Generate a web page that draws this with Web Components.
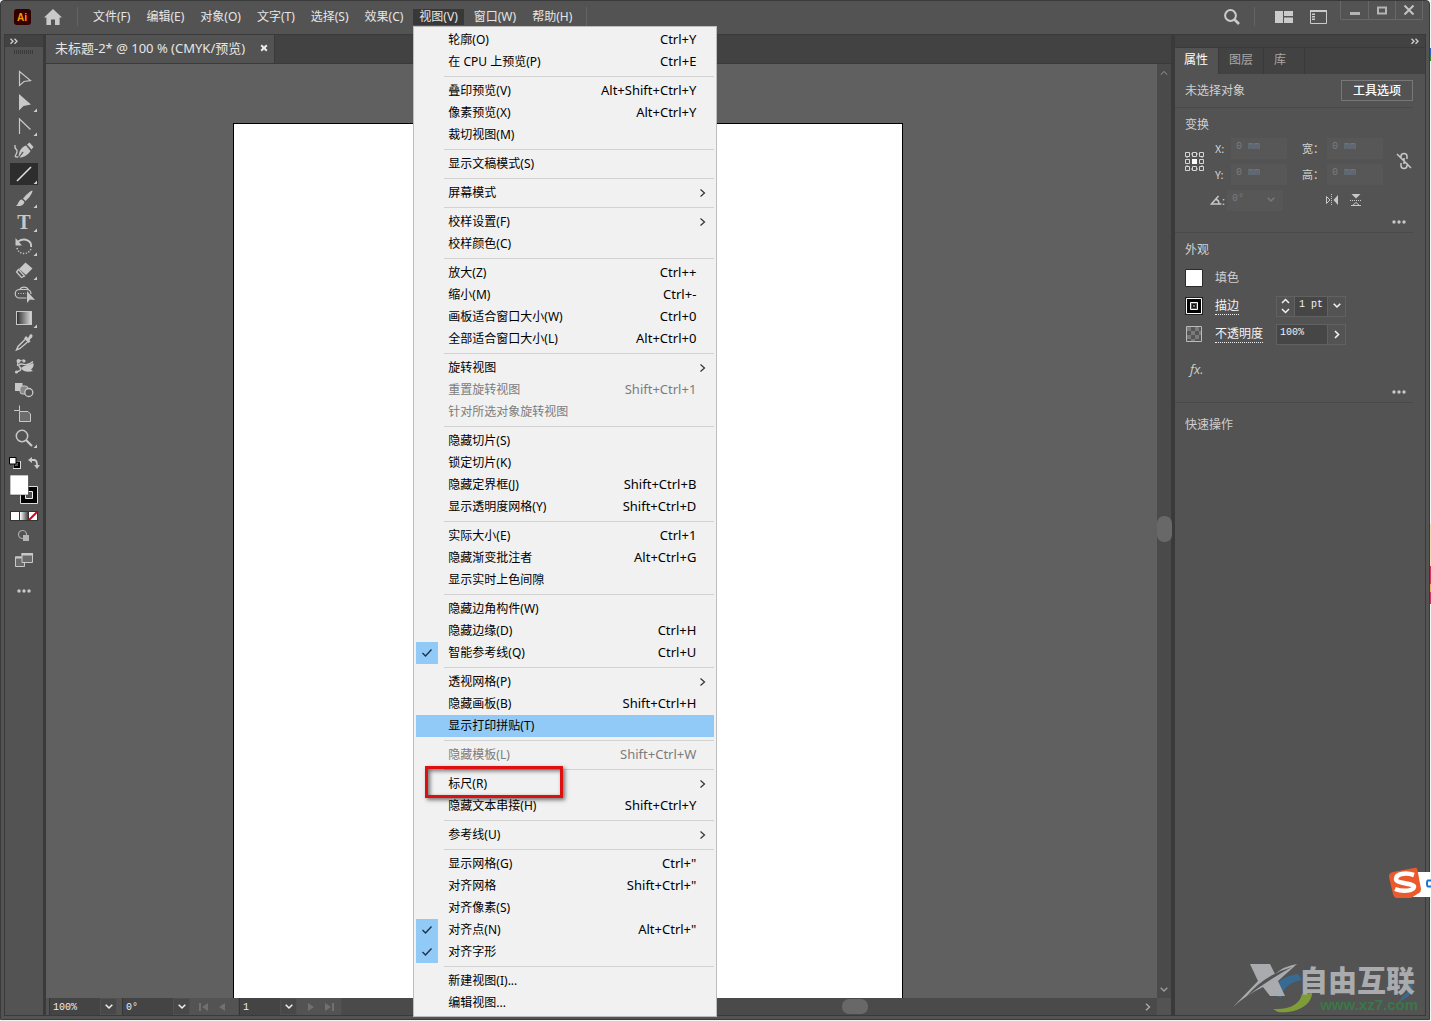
<!DOCTYPE html>
<html lang="zh-CN">
<head>
<meta charset="utf-8">
<title>Illustrator</title>
<style>
html,body{height:100%;margin:0}
body{background:linear-gradient(#f4f4f4 0 48px,#2f62c8 48px 55px,#3a8a2c 55px 61px,#f4f4f4 61px 524px,#f3d9b8 524px 566px,#d4365c 566px 584px,#e8b47a 584px 592px,#d4365c 592px 604px,#f4f4f4 604px);overflow:hidden;position:relative;font:12px/16px "Noto Sans","Noto Sans CJK SC",sans-serif;color:#e6e6e6;
--bg:#535353;--dark:#424242;--line:#3a3a3a;--field:#474747;--edge:#626262;--hi:#91c9f7}
</style>
</head>
<body>
<ai-window>
  <title-bar slot="top">
    <menu-title>文件(F)</menu-title>
    <menu-title>编辑(E)</menu-title>
    <menu-title>对象(O)</menu-title>
    <menu-title>文字(T)</menu-title>
    <menu-title>选择(S)</menu-title>
    <menu-title>效果(C)</menu-title>
    <menu-title open>视图(V)
      <drop-menu slot="menu">
        <menu-entry keys="Ctrl+Y">轮廓(O)</menu-entry>
        <menu-entry keys="Ctrl+E">在 CPU 上预览(P)</menu-entry>
        <menu-line></menu-line>
        <menu-entry keys="Alt+Shift+Ctrl+Y">叠印预览(V)</menu-entry>
        <menu-entry keys="Alt+Ctrl+Y">像素预览(X)</menu-entry>
        <menu-entry>裁切视图(M)</menu-entry>
        <menu-line></menu-line>
        <menu-entry>显示文稿模式(S)</menu-entry>
        <menu-line></menu-line>
        <menu-entry more>屏幕模式</menu-entry>
        <menu-line></menu-line>
        <menu-entry more>校样设置(F)</menu-entry>
        <menu-entry>校样颜色(C)</menu-entry>
        <menu-line></menu-line>
        <menu-entry keys="Ctrl++">放大(Z)</menu-entry>
        <menu-entry keys="Ctrl+-">缩小(M)</menu-entry>
        <menu-entry keys="Ctrl+0">画板适合窗口大小(W)</menu-entry>
        <menu-entry keys="Alt+Ctrl+0">全部适合窗口大小(L)</menu-entry>
        <menu-line></menu-line>
        <menu-entry more>旋转视图</menu-entry>
        <menu-entry off keys="Shift+Ctrl+1">重置旋转视图</menu-entry>
        <menu-entry off>针对所选对象旋转视图</menu-entry>
        <menu-line></menu-line>
        <menu-entry>隐藏切片(S)</menu-entry>
        <menu-entry>锁定切片(K)</menu-entry>
        <menu-entry keys="Shift+Ctrl+B">隐藏定界框(J)</menu-entry>
        <menu-entry keys="Shift+Ctrl+D">显示透明度网格(Y)</menu-entry>
        <menu-line></menu-line>
        <menu-entry keys="Ctrl+1">实际大小(E)</menu-entry>
        <menu-entry keys="Alt+Ctrl+G">隐藏渐变批注者</menu-entry>
        <menu-entry>显示实时上色间隙</menu-entry>
        <menu-line></menu-line>
        <menu-entry>隐藏边角构件(W)</menu-entry>
        <menu-entry keys="Ctrl+H">隐藏边缘(D)</menu-entry>
        <menu-entry checked keys="Ctrl+U">智能参考线(Q)</menu-entry>
        <menu-line></menu-line>
        <menu-entry more>透视网格(P)</menu-entry>
        <menu-entry keys="Shift+Ctrl+H">隐藏画板(B)</menu-entry>
        <menu-entry active>显示打印拼贴(T)</menu-entry>
        <menu-line></menu-line>
        <menu-entry off keys="Shift+Ctrl+W">隐藏模板(L)</menu-entry>
        <menu-line></menu-line>
        <menu-entry more marked>标尺(R)</menu-entry>
        <menu-entry keys="Shift+Ctrl+Y">隐藏文本串接(H)</menu-entry>
        <menu-line></menu-line>
        <menu-entry more>参考线(U)</menu-entry>
        <menu-line></menu-line>
        <menu-entry keys='Ctrl+"'>显示网格(G)</menu-entry>
        <menu-entry keys='Shift+Ctrl+"'>对齐网格</menu-entry>
        <menu-entry>对齐像素(S)</menu-entry>
        <menu-entry checked keys='Alt+Ctrl+"'>对齐点(N)</menu-entry>
        <menu-entry checked>对齐字形</menu-entry>
        <menu-line></menu-line>
        <menu-entry>新建视图(I)...</menu-entry>
        <menu-entry>编辑视图...</menu-entry>
      </drop-menu>
    </menu-title>
    <menu-title>窗口(W)</menu-title>
    <menu-title>帮助(H)</menu-title>
  </title-bar>
  <tool-rail></tool-rail>
  <doc-view name="未标题-2* @ 100 % (CMYK/预览)"></doc-view>
  <props-panel></props-panel>
</ai-window>
<site-mark></site-mark>
<ime-badge></ime-badge>

<script>
const RESET = `*{box-sizing:border-box}button,input,select{font:inherit;color:inherit;background:none;border:0;padding:0;margin:0;border-radius:0;outline:0;appearance:none;text-align:left}svg{display:block;flex:none}`;
function define(name, html) {
  const t = document.createElement('template');
  customElements.define(name, class extends HTMLElement {
    constructor() {
      super();
      t.innerHTML = '<style>' + RESET + '</style>' + (typeof html === 'function' ? html(this) : html);
      this.attachShadow({mode: 'open'}).append(t.content.cloneNode(true));
    }
  });
}

define('ai-window', `
<style>
:host{display:flex;flex-direction:column;height:calc(100% - 1px);margin-right:1px;background:var(--bg);border:1px solid var(--line);border-radius:4px 4px 0 0;box-sizing:border-box}
main{flex:1;display:flex;min-height:0;margin:0 3px 3px;border:1px solid var(--line)}
</style>
<slot name="top"></slot><main><slot></slot></main>`);

define('title-bar', `
<style>
:host{display:flex;align-items:center;height:33px;flex:none;padding:0 0 2px 13px;box-sizing:border-box}
.home{margin:0 15px 0 13px}
i{width:1px;height:19px;background:#646464;flex:none}
nav{display:flex;gap:4px;margin:0 8px 0 9px}
.ws{margin-left:auto;display:flex;align-items:center;padding-right:13px}
.win{display:flex;align-self:flex-start;margin-right:6px;border:1px solid #686868;border-top:0;border-radius:0 0 2px 2px}
.win button{width:27px;height:18px;display:grid;place-items:center}
.win button+button{border-left:1px solid #686868}
</style>
<svg width="17" height="16"><rect width="17" height="16" rx="3" fill="#300"/><text x="3" y="12" font-family="Liberation Sans" font-weight="700" font-size="10" fill="#ff9a00">Ai</text></svg>
<button class="home" aria-label="主页"><svg width="18" height="16"><path d="M9 0 18 8.4H15.6V16H11V10.5H7V16H2.4V8.4H0z" fill="#c9c9c9"/></svg></button>
<i></i>
<nav><slot></slot></nav>
<i></i>
<div class="ws">
<button aria-label="搜索"><svg width="18" height="18" fill="none" stroke="#cbcbcb"><circle cx="7.5" cy="7.5" r="5.4" stroke-width="2"/><path d="m11.5 11.5 4.5 4.5" stroke-width="2.6"/></svg></button>
<i style="margin:0 20px 0 13px"></i>
<button aria-label="排列文档"><svg width="18" height="12" fill="#cbcbcb"><path d="M0 0H8V12H0zM9 0H18V5H9zM9 6.500H18V12H9z"/></svg></button>
<button aria-label="工作区" style="margin-left:17px"><svg width="17" height="14"><path d="M.5 1H16.500V13.500H.5z" fill="none" stroke="#cbcbcb"/><path d="M0 0H17V2H0zM2 3.500H5V5H2zM2 6H5V7.500H2zM2 8.500H5V10H2z" fill="#cbcbcb"/></svg></button>
</div>
<div class="win">
<button aria-label="最小化"><svg width="12" height="10"><path d="M1 7H11V10H1z" fill="#b4b4b4"/></svg></button>
<button aria-label="最大化"><svg width="12" height="10"><path d="M2 2.500H10V8.500H2z" fill="none" stroke="#b4b4b4" stroke-width="2"/></svg></button>
<button aria-label="关闭"><svg width="12" height="10"><path d="M1.500.5 10.500 9.500M10.500.5 1.500 9.500" stroke="#c4c4c4" stroke-width="2"/></svg></button>
</div>`);

define('menu-title', el => `
<style>
:host{display:block;position:relative}
button{height:16px;padding:0 6px;display:block;white-space:nowrap}
:host([open]) button{background:#383838}
</style>
<button${el.hasAttribute('open') ? ' aria-expanded="true"' : ''}><slot></slot></button><slot name="menu"></slot>`);

define('drop-menu', `
<style>
:host{display:block;position:absolute;z-index:5;top:calc(100% + 1px);left:0;width:304px;padding:2px;box-sizing:border-box;background:#f1f1f1;border:1px solid #bdbdbd;color:#000}
</style><slot></slot>`);

define('menu-line', `
<style>:host{display:block;height:7px;padding:3px 0 0 28px;box-sizing:border-box}hr{margin:0;border:0;height:1px;background:#d2d2d2}</style><hr>`);

define('menu-entry', el => `
<style>
:host{display:block;position:relative}
button{display:flex;align-items:center;width:100%;height:22px;white-space:nowrap}
.c{width:22px;height:22px;display:grid;place-items:center;margin-right:10px}
.l{flex:1}
.k{margin-right:18px;padding-bottom:2px;font-size:13px}
:host([checked]) .c,:host([active]) button{background:var(--hi)}
:host([off]) button{color:#7c7c7c}
:host([more]) svg.m{margin-right:8px}
.mark{position:absolute;z-index:2;left:9px;top:-7px;width:138px;height:32px;border:3px solid #dc1010;box-shadow:2px 2px 4px #0008,inset 2px 2px 4px #0008;pointer-events:none}
</style>
<button role="menuitem"${el.hasAttribute('off') ? ' disabled' : ''}><span class="c">${el.hasAttribute('checked') ? '<svg width="12" height="10"><path d="m1.500 5 3 3L10.500 1.500" fill="none" stroke="#1e3346" stroke-width="1.400"/></svg>' : ''}</span><span class="l"><slot></slot></span>${el.hasAttribute('keys') ? `<span class="k">${el.getAttribute('keys')}</span>` : ''}${el.hasAttribute('more') ? '<svg class="m" width="7" height="10"><path d="m1.500 1.500 4 3.500-4 3.500" fill="none" stroke="#333" stroke-width="1.200"/></svg>' : ''}</button>${el.hasAttribute('marked') ? '<div class="mark"></div>' : ''}`);

const G = '#c8c8c8';
const tools = [
 ['选择工具', `<path d="M9.500 4.500V18.500L14 14.500 20.500 13.500z" fill="none" stroke="${G}" stroke-width="1.200"/>`, 0],
 ['直接选择工具', `<path d="M9 3V19.500L13.500 15 21 13.500z" fill="${G}"/>`, 1],
 ['锚点工具', `<path d="M9.500 19V4L20.500 14.500" fill="none" stroke="${G}" stroke-width="1.200"/>`, 1],
 ['曲率工具', `<path d="M5 6C4 12 8 9 7 13S3 18 8 18" fill="none" stroke="${G}" stroke-width="1.300"/><path d="M8.500 18.500C9 12 11 8.500 16 6.500L20.500 12C18 16 14 18.500 9.500 18.500L13.500 13.500 12.500 12.500z" fill="${G}"/><path d="M17 5.500 19.500 3.500 23.500 8 21.500 10.500z" fill="${G}"/>`, 0],
 ['直线段工具', `<path d="M7 18 21 4" stroke="#dcdcdc" stroke-width="1.600"/>`, 1, 1],
 ['画笔工具', `<path d="M22.500 3.500C20 4 16 8 13 11.500L15.500 14C19 11 22.500 6.500 22.500 3.500z" fill="${G}"/><path d="M12 12.500 14.500 15C13.500 18.500 10 19.500 6 19 8.500 17.500 8 13 12 12.500z" fill="${G}"/>`, 1],
 ['文字工具', `<text x="14" y="18" text-anchor="middle" font-family="Liberation Serif" font-weight="700" font-size="20" fill="${G}">T</text>`, 1],
 ['旋转工具', `<path d="M8 6.500C15 2 22 6 21 12" fill="none" stroke="${G}" stroke-width="1.900"/><path d="M5.500 3V10.500H12z" fill="${G}"/><path d="M7 13C9 20.500 19 20 21 13.500" fill="none" stroke="${G}" stroke-width="1.500" stroke-dasharray="1.200 1.600"/>`, 1],
 ['橡皮擦工具', `<path d="M15.500 3.500 22.500 9.500 16 16 9 10z" fill="${G}"/><path d="M8.500 10.500 6.500 13 11.500 18.500 14.500 17z" fill="none" stroke="${G}" stroke-width="1.300"/>`, 1],
 ['形状生成器工具', `<path d="M16.500 15H9.500A4.200 4.200 0 0 1 9.500 6.500H17A4.200 4.200 0 0 1 21 11" fill="none" stroke="${G}" stroke-width="1.200"/><path d="M9.500 7A5 5 0 0 1 18.500 7" fill="none" stroke="${G}" stroke-width="1.200"/><path d="M8 10.500H16" stroke="${G}" stroke-dasharray="1 1.500"/><path d="M17 8V20L20 16.500 25 17z" fill="${G}"/>`, 0],
 ['渐变工具', `<defs><linearGradient id="g"><stop stop-color="#2c2c2c"/><stop offset="1" stop-color="#ddd"/></linearGradient></defs><rect x="6.500" y="4.500" width="15" height="13" fill="url(#g)" stroke="${G}"/>`, 1],
 ['吸管工具', `<path d="M16 5 18 7 20 3.500C22 2.500 23.500 4.500 22 6.500L19.500 9 20.500 10.500 18.500 12 14 7.500z" fill="${G}"/><path d="M15 8.500 8 15.500 6.500 19 10 17.500 17.500 11" fill="none" stroke="${G}" stroke-width="1.400"/>`, 0],
 ['操控变形工具', `<path d="M6 17C10 16 12 15 10 12.500S8.500 9 11.500 9 17 12 23 6.500" fill="none" stroke="${G}" stroke-width="1.500"/><path d="M11 13C14 10 19 10.500 23 8C24.500 10 23 13 21 14.500L23 16C19 17.500 13 17 11 13z" fill="${G}"/><path d="M7.500 11C7 7 9 5 14 5" fill="none" stroke="${G}" stroke-width="1.200"/><circle cx="8.500" cy="6" r="2" fill="${G}"/><circle cx="14" cy="6" r="1.600" fill="${G}"/><circle cx="6.500" cy="17" r="1.600" fill="${G}"/>`, 0],
 ['混合工具', `<rect x="5" y="4" width="7.500" height="8" fill="${G}"/><rect x="10" y="7" width="8" height="8" rx="2.500" fill="#888" stroke="${G}"/><circle cx="18.800" cy="13.500" r="4" fill="#535353" stroke="${G}" stroke-width="1.300"/>`, 0],
 ['画板工具', `<path d="M9.500 2.500V8M4 7.500H9" stroke="${G}"/><path d="M9.500 8.500H18L20.500 11V18.500H9.500z" fill="#6c6c6c" stroke="${G}"/>`, 0],
 ['缩放工具', `<circle cx="12" cy="9" r="5.700" fill="none" stroke="${G}" stroke-width="1.500"/><path d="m16 13 6 6" stroke="${G}" stroke-width="2.200"/>`, 1]
];
const dots = '<svg width="14" height="4" fill="#c8c8c8"><circle cx="2" cy="2" r="1.700"/><circle cx="7" cy="2" r="1.700"/><circle cx="12" cy="2" r="1.700"/></svg>';
const dbl = '<svg width="8" height="7" fill="none" stroke="#ccc" stroke-width="1.400"><path d="M.5.7 3 3.200.5 5.700M4.500.7 7 3.200 4.500 5.700"/></svg>';

define('tool-rail', `
<style>
:host{display:flex;flex-direction:column;width:38px;flex:none;background:var(--bg)}
.h{height:12px;background:var(--dark);padding:3px 5px}
.grip{height:4px;width:20px;margin:3px 0 13px 9px;background:repeating-linear-gradient(90deg,#3a3a3a 0 1px,transparent 1px 2px)}
.t{display:flex;flex-direction:column;gap:2px;padding:0 5px}
.t button{height:22px;width:28px}
.t button.sel{background:#2d2d2d}
.row{display:flex;justify-content:space-between;padding:0 3px 0 4px;margin:8px 0 6px}
.b{display:flex;flex-direction:column;align-items:flex-start;padding-left:5px}
</style>
<div class="h">${dbl}</div><div class="grip"></div>
<div class="t">${tools.map(([n, p, c, s]) => `<button aria-label="${n}"${s ? ' class="sel"' : ''}><svg width="28" height="22">${p}${c ? '<path d="M27 17.500V21H23.500z" fill="#d0d0d0"/>' : ''}</svg></button>`).join('')}</div>
<div class="row"><button aria-label="默认填色和描边"><svg width="12" height="12"><path d="M5.500 5.500H10.500V10.500H5.500z" fill="none" stroke="#ddd" stroke-width="3"/><path d="M5.500 5.500H10V10H5.500z" fill="none" stroke="#000" stroke-width="2"/><path d="M.5.5H7V7H.5z" fill="#fff" stroke="#000"/></svg></button>
<button aria-label="互换填色和描边"><svg width="12" height="12" fill="#c8c8c8"><path d="M4 0V6L0 3zM6 8H12L9 12z"/><path d="M3 3H6Q9 3 9 8" fill="none" stroke="#c8c8c8" stroke-width="1.800"/></svg></button></div>
<div class="b">
<button aria-label="填色和描边"><svg width="29" height="30"><path d="M10.500 11.500H27.500V28.500H10.500z" fill="#000" stroke="#ddd"/><path d="M15.500 16.500H22.500V23.500H15.500z" fill="#535353" stroke="#eee"/><path d="M0 0H18.500V20H0z" fill="#fff" stroke="#333" stroke-width=".6"/></svg></button>
<button aria-label="颜色类型" style="margin-top:6px"><svg width="28" height="10"><defs><linearGradient id="w"><stop stop-color="#fff"/><stop offset="1" stop-color="#444"/></linearGradient></defs><path d="M0 0H28V10H0z" fill="#333"/><path d="M1 1H9V9H1z" fill="#fff"/><path d="M10 1H18V9H10z" fill="url(#w)"/><path d="M19 1H27V9H19z" fill="#fff"/><path d="M19 9 27 1" stroke="#d6001c" stroke-width="2"/></svg></button>
<button aria-label="绘图模式" style="margin-top:8px"><svg width="28" height="14"><circle cx="12.500" cy="5.500" r="4" fill="none" stroke="#aaa" stroke-width="1.200"/><path d="M13 6H19V12H13z" fill="#b4b4b4"/></svg></button>
<button aria-label="屏幕模式" style="margin-top:8px"><svg width="28" height="18"><path d="M5.500 6H14.500V15.500H5.500z" fill="#6a6a6a" stroke="#c8c8c8"/><path d="M12 2.500H22.500V11.500H12z" fill="#6a6a6a" stroke="#c8c8c8"/><path d="M5 5.500H12V7.500H5zM11.500 2H23V4.500H11.500z" fill="#c8c8c8"/></svg></button>
<button aria-label="编辑工具栏" style="margin:20px 0 0 7px">${dots}</button>
</div>`);

const down = '<svg width="8" height="6"><path d="m.7.8 3.300 3.200L7.300.8" fill="none" stroke="currentColor" stroke-width="1.600"/></svg>';
define('num-box', el => `
<style>
:host{display:flex;height:17px;color:#eee;font:10px/14px "Liberation Mono",monospace}
input{width:${el.getAttribute('w')}px;height:100%;background:#444;border-left:1px solid #353535;padding:1px 4px 0 3px}
button{width:17px;display:grid;place-items:center;background:#484848;border:1px solid #505050}
</style><input aria-label="${el.getAttribute('label')}" value="${el.getAttribute('value')}"><button aria-label="展开">${down}</button>`);

define('doc-view', el => `
<style>
:host{flex:1;min-width:0;display:flex;flex-direction:column;border:solid var(--line);border-width:0 4px 0 3px}
.tabs{height:29px;background:var(--dark);border-bottom:1px solid var(--line);display:flex;flex:none}
.tab{display:flex;align-items:center;gap:15px;padding:0 6px 2px 9px;background:var(--bg);border-right:1px solid var(--line);white-space:nowrap;font-size:13px}
.mid{flex:1;display:flex;min-height:0}
.cv{flex:1;background:#606060;padding:59px 254px 0 187px;display:flex}
.art{flex:1;background:#fff;border:1px solid #000;border-bottom:0}
.vs{width:14px;background:#4a4a4a;display:flex;flex-direction:column;align-items:center;justify-content:space-between;padding:6px 0 5px;color:#999}
.vs b{width:15px;height:26px;border-radius:7px;background:#686868;margin-bottom:6px}
.st{height:17px;display:flex;flex:none;background:var(--bg)}
.nav{display:flex;align-items:center;gap:11px;padding:0 13px 0 9px;border-right:1px solid #4c4c4c}
.nav+num-box+.nav{padding:0 7px 0 11px}
.hs{flex:1;background:#4a4a4a;display:flex;align-items:center;justify-content:flex-end;padding-right:6px;color:#aaa}
.hs b{width:26px;height:15px;border-radius:7px;background:#686868;margin-right:277px}
.cor{width:14px}
</style>
<div class="tabs"><div class="tab"><span>${el.getAttribute('name')}</span><button aria-label="关闭标签"><svg width="8" height="8"><path d="m1.200 1.200 5.600 5.600M6.800 1.200 1.200 6.800" stroke="#eee" stroke-width="2"/></svg></button></div></div>
<div class="mid"><div class="cv"><div class="art"></div></div><div class="vs"><svg width="8" height="6"><path d="m.7 4.700 3.300-3.200 3.300 3.200" fill="none" stroke="currentColor"/></svg><b></b>${down}</div></div>
<div class="st">
<num-box style="margin:0 5px 0 3px" w="51" label="缩放" value="100%"></num-box>
<num-box w="51" label="旋转" value="0°"></num-box>
<div class="nav"><svg width="9" height="8" fill="#707070"><path d="M0 0H2V8H0zM9 0V8L3 4z"/></svg><svg width="6" height="8" fill="#707070"><path d="M6 0V8L0 4z"/></svg></div>
<num-box w="41" label="画板" value="1"></num-box>
<div class="nav"><svg width="6" height="8" fill="#707070"><path d="M0 0V8L6 4z"/></svg><svg width="9" height="8" fill="#707070"><path d="M9 0H7V8H9zM0 0V8L6 4z"/></svg></div>
<div class="hs"><b></b><svg width="6" height="8"><path d="m1 .7 3.500 3.300L1 7.300" fill="none" stroke="currentColor" stroke-width="1.400"/></svg></div><div class="cor"></div>
</div>`);

define('props-panel', `
<style>
:host{display:flex;flex-direction:column;width:250px;flex:none;background:var(--bg);color:#d0d0d0}
.h{height:12px;background:var(--dark);display:flex;justify-content:flex-end;padding:3px 6px}
.tabs{height:27px;background:var(--dark);display:flex;border-top:1px solid var(--line)}
.tabs button{padding:0 10px 2px;border-right:1px solid var(--line);color:#a8a8a8}
.tabs button.on{background:var(--bg);color:#fff;padding-left:9px}
.tabs button:last-child{padding-right:18px}
section{padding:0 12px 0 10px}
section+section{border-top:1px solid #494949;margin-right:12px;padding-right:0}
.sel{height:33px;display:flex;align-items:center;justify-content:space-between}
.opt{height:21px;border:1px solid #777;color:#fff;padding:0 11px;font-weight:500}
h3{font:inherit;margin:0}
.tr{height:125px;padding-top:9px}
.g{display:flex;align-items:center;height:52px;margin-top:2px}
.c{display:flex;flex-direction:column;gap:5px}
.c div{display:flex;align-items:center;height:21px}
.c label,.pt{font:11px/14px "Noto Sans CJK SC",sans-serif;white-space:nowrap}
.a{margin-left:11px}
.a label{width:16px}
.b{margin-left:15px}
.b label{width:25px}
.f{height:21px;width:56px;background:#575757;color:#7b7b7b;font:10px/16px "Liberation Mono",monospace;padding:0 5px 3px;min-width:0}
.ang{display:flex;align-items:center;height:26px;padding-left:25px}
.ang .f{margin-left:2px}
.sw{display:flex;align-items:center;color:#777}
.sw svg{margin-left:-16px;pointer-events:none}
.more{display:flex;justify-content:flex-end;padding-right:7px}
.ap{height:170px;padding-top:9px}
.r{display:flex;align-items:center;height:28px}
.r>span,.r>label{width:61px;margin-left:12px}
.u{color:#f2f2f2}
.u u{text-decoration:none;border-bottom:1px dotted #eee}
.bx{display:flex;height:21px;border:1px solid #616161;color:#f2f2f2}
.bx input{width:34px;background:#464646;font:10px/14px "Liberation Mono",monospace;padding:0 3px 3px 4px;border:solid #616161;border-width:0 1px}
.bx input.w{width:51px;border-left:0;padding-left:3px}
.bx button{width:17px;display:grid;place-items:center}
.fx{display:block;margin:12px 0 0 5px;font:italic 13px/18px "Open Sans",sans-serif}
</style>
<div class="h">${dbl}</div>
<div class="tabs"><button class="on">属性</button><button>图层</button><button>库</button></div>
<section class="sel"><span>未选择对象</span><button class="opt">工具选项</button></section>
<section class="tr"><h3>变换</h3>
<div class="g">
<svg width="19" height="19" fill="none" stroke="#d4d4d4"><path d="M2 2H17V17H2z" stroke-dasharray="1 1"/><g fill="#535353"><path d="M.5.5h4v4h-4zM7.500.5h4v4h-4zM14.500.5h4v4h-4zM.5 7.500h4v4h-4zM14.500 7.500h4v4h-4zM.5 14.500h4v4h-4zM7.500 14.500h4v4h-4zM14.500 14.500h4v4h-4z"/></g><path d="M7 7H12V12H7z" fill="#fff" stroke="none"/></svg>
<div class="c a"><div><label for="x">X:</label><input id="x" class="f" value="0 mm"></div><div><label for="y">Y:</label><input id="y" class="f" value="0 mm"></div></div>
<div class="c b"><div><label for="w">宽：</label><input id="w" class="f" value="0 mm"></div><div><label for="hh">高：</label><input id="hh" class="f" value="0 mm"></div></div>
<svg style="margin-left:13px" width="16" height="18" fill="none" stroke="#c8c8c8" stroke-width="1.500"><path d="M5 7V4.500A3 3 0 0 1 11 4.500V7M5 11V13.500A3 3 0 0 0 11 13.500V11M8 6V12M1 2 15 16"/></svg>
</div>
<div class="ang"><svg width="12" height="10" fill="none" stroke="#c8c8c8" stroke-width="1.500"><path d="M11.500 9H1.500L8.500 1M6 4.500Q9 5 9 9"/></svg><label class="pt" for="an">:</label><span class="sw"><input id="an" class="f" value="0°">${down}</span>
<svg style="margin-left:50px" width="14" height="12" fill="#c8c8c8"><path d="M1.500 2.500V9.500L5 6z" fill="none" stroke="#c8c8c8"/><path d="M13 1V11L8.500 6z"/><path d="M6.500 0V12" stroke="#c8c8c8" stroke-dasharray="1 1"/></svg>
<svg style="margin-left:11px" width="12" height="14" fill="#c8c8c8"><path d="M1.500 1H10.500L6 5.500z"/><path d="M2.500 12.500H9.500L6 9.500z" fill="none" stroke="#c8c8c8"/><path d="M0 7.500H12" stroke="#c8c8c8" stroke-dasharray="1 1"/><path d="M1 12.500H11" stroke="#c8c8c8"/></svg></div>
<div class="more" style="padding-top:7px">${dots}</div>
</section>
<section class="ap"><h3>外观</h3>
<div class="r" style="margin-top:6px"><svg width="18" height="18"><path d="M.5.5H17.500V17.500H.5z" fill="#fff" stroke="#2b2b2b"/></svg><span>填色</span></div>
<div class="r"><svg width="18" height="18"><path d="M0 0H18V18H0z" fill="#222"/><path d="M1.500 1.500H16.500V16.500H1.500z" fill="#000" stroke="#fff"/><path d="M5.500 5.500H12.500V12.500H5.500z" fill="#535353" stroke="#fff"/><path d="M7.500 7.500h3v3h-3z" fill="#777" stroke="#111"/></svg><label class="u" for="sk"><u>描边</u></label>
<div class="bx"><button aria-label="增减"><svg width="9" height="16" fill="none" stroke="currentColor" stroke-width="1.500"><path d="m1 5 3.500-3.500L8 5M1 11l3.500 3.500L8 11"/></svg></button><input id="sk" value="1 pt"><button aria-label="展开描边">${down}</button></div></div>
<div class="r"><svg width="18" height="18"><path d="M1.500 1.500H16.500V16.500H1.500z" fill="#555"/><path d="M2 2h4v4H2zM10 2h4v4h-4zM6 6h4v4H6zM14 6h2v4h-2zM2 10h4v4H2zM10 10h4v4h-4zM6 14h4v2H6z" fill="#7a7a7a"/><path d="M1.500 1.500H16.500V16.500H1.500z" fill="none" stroke="#bbb"/></svg><label class="u" for="op"><u>不透明度</u></label>
<div class="bx"><input class="w" id="op" value="100%"><button aria-label="展开不透明度"><svg width="6" height="9"><path d="m1 1 3.500 3.500L1 8" fill="none" stroke="currentColor" stroke-width="1.600"/></svg></button></div></div>
<button class="fx" aria-label="效果">fx.</button>
<div class="more" style="padding-top:12px">${dots}</div>
</section>
<section style="padding-top:14px"><h3>快速操作</h3></section>`);

define('site-mark', `
<style>
:host{position:absolute;right:11px;bottom:5px;width:188px;height:54px;display:block;pointer-events:none}
svg{position:absolute;inset:0}
p{margin:0;text-align:right;position:relative}
.a{font:900 29px/34px "Noto Sans CJK SC",sans-serif;color:#a9abae;padding-right:5px}
.b{font:bold 15px/18px "Liberation Sans",sans-serif;color:#3a7847;padding-right:2px}
</style>
<svg width="188" height="54" viewBox="0 0 188 54"><path d="M66 12C50 14 38 24 42 33L49 36C50 26 58 20 70 18zM170 13C184 20 186 32 166 40L172 33C180 28 178 20 170 13z" fill="#386b94"/><path d="M41 47C58 48 68 42 70 32L80 31C80 44 62 52 46 50z" fill="#7f9d37"/><path d="M18 2H38L43 12Q52 4 65 2L46 19 53 34H38L31 25Q14 33 1 45L26 19z" fill="#a9abae"/><path d="M14 35Q32 13 60 5 36 18 14 35z" fill="#535353"/></svg>
<p class="a">自由互联</p><p class="b">www.xz7.com</p>`);

define('ime-badge', `
<style>:host{position:absolute;right:0;bottom:121px;width:43px;height:34px;display:block}</style>
<svg width="43" height="34" role="img" aria-label="输入法"><path d="M14 6H43V31H14z" fill="#fff"/><path d="m5 6 21-4q3-1 3.500 2L33 23q0 3-2 4l-8 5H9q-3 0-4-4L1 11q-.5-4 4-5z" fill="#eb5a2c"/><path d="M26 9C17 6 8 8 8 13S27 17 26 21 15 26 7 23" fill="none" stroke="#fff" stroke-width="4.500"/><path d="M43 14.500H40Q39 14.500 39 17.500T40 20.500H43" fill="none" stroke="#1b75d0" stroke-width="2"/></svg>`);
</script>
</body>
</html>
